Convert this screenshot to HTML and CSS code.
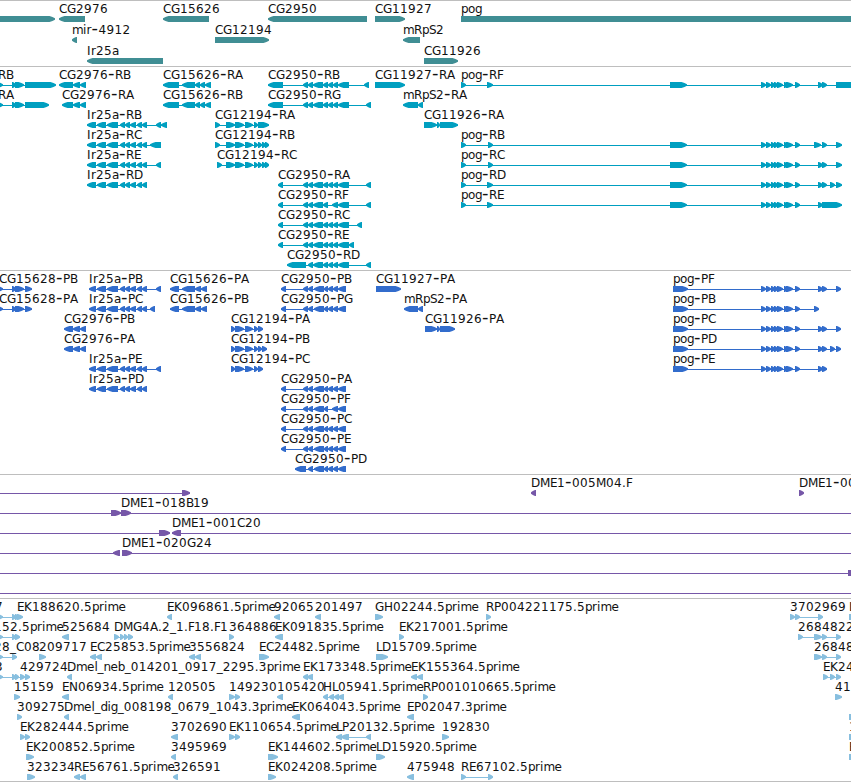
FILE: index.html
```html
<!doctype html>
<html lang="en">
  <head>
    <meta charset="utf-8">
    <meta name="viewport" content="width=device-width,initial-scale=1">

    <title>Genome browser</title>

    <link rel="stylesheet" href="styles.css">
  </head>

  <body>
    <main>
      <section class="track genes" data-track="genes"></section>
      <section class="track transcripts" data-track="transcripts"></section>
      <section class="track proteins" data-track="proteins"></section>
      <section class="track clones" data-track="clones"></section>
      <section class="track ests" data-track="ests"></section>
    </main>

    <script src="tracks.js"></script>
  </body>
</html>
```

FILE: styles.css
```css
body {
  margin: 0;
  background: #fff;
  overflow: hidden;
}

main {
  width: 851px;
  overflow: hidden;
  border-bottom: 1px solid #bebebe;
}

.track {
  box-sizing: border-box;
  border-top: 1px solid #bebebe;
  height: 204px;
  overflow: hidden;
}

.row {
  display: block;
  width: 851px;
  height: 20px;
  overflow: visible;
}

.row text {
  font-family: "DejaVu Sans", sans-serif;
  font-size: 12px;
  fill: #111;
}

/* the font's own hyphen is too short at label size */
.row .dash {
  font-size: 18px;
}

.genes {
  height: 66px;
  color: #408e94;
}

.genes .row {
  height: 21px;
}

.transcripts {
  color: #009fc0;
}

.proteins {
  color: #326ccc;
}

.clones {
  height: 124px;
  color: #7657a8;
}

.ests {
  height: 183px;
  color: #88bfdf;
}

.row path,
.row rect {
  fill: currentColor;
}
```

FILE: tracks.js
```js
(function() {
  var NS = 'http://www.w3.org/2000/svg';
  var HEAD = 5.5;

  // label advances in px, anything missing is a digit width
  var ADVANCE = {
    A: 8, B: 7, C: 8, D: 9, E: 7, F: 6, G: 9, H: 9, I: 4, K: 8, L: 6, M: 10,
    N: 9, P: 7, R: 8, S: 7, a: 7, b: 7, d: 7, e: 7.4, g: 7, i: 3.4, l: 3,
    m: 11, n: 7, o: 7, p: 7, r: 5, '-': 7, '_': 6, '.': 4
  };

  // exon groups shared by several features
  var IR = '97-106 107-118 120-125 125-130 130-136 137-142 142-147';
  var CG2950 = '303-308 308-313 313-323 323-328 328-333 333-338 338-349';
  var CG2950F = '303-308 308-313 313-323 323-328 332-338 338-349';
  var CG2950P = '303-308 308-313 314-324 324-328 328-333 333-338 338-346';
  var POG = '761-766 766-771 771-775 774-778 777-783 784-788 786-793 795-800';

  // [label, x, direction, exons, line]
  var tracks = {
    genes: [
      [
        ['', 0, '>', '-20-55'],
        ['CG2976', 59, '<', '59-85'],
        ['CG15626', 163, '<', '163-209'],
        ['CG2950', 268, '<', '268-367'],
        ['CG11927', 375, '>', '375-405'],
        ['pog', 461, '>', '461-900']
      ],
      [
        ['mir-4912', 72, '<', '72-77'],
        ['CG12194', 215, '>', '215-269'],
        ['mRpS2', 403, '<', '403-420']
      ],
      [
        ['Ir25a', 87, '<', '87-163'],
        ['CG11926', 424, '>', '424-458']
      ]
    ],

    transcripts: [
      [
        ['CG15628-RB', -66, '>', '-3-3 12-16 15-24 25-56', '0-55'],
        ['CG2976-RB', 59, '<', '59-73 73-80 80-86'],
        ['CG15626-RA', 163, '<', '163-179 182-195 195-200 200-205 205-211', '163-211'],
        ['CG2950-RB', 268, '<', '268-283 ' + CG2950 + ' 364-369', '268-369'],
        ['CG11927-RA', 375, '>', '375-405'],
        ['pog-RF', 461, '>', '461-466 487-493 670-687 ' + POG + ' 818-823 822-827 836-870', '461-851']
      ],
      [
        ['CG15628-RA', -66, '>', '-3-3 12-16 15-24 25-49', '0-48'],
        ['CG2976-RA', 62, '<', '62-73 73-80 80-86'],
        ['CG15626-RB', 163, '<', '163-179 182-195 195-200 200-205 205-211', '163-211'],
        ['CG2950-RG', 268, '<', '268-283 ' + CG2950 + ' 366-371', '268-371'],
        ['mRpS2-RA', 403, '<', '403-418 418-423']
      ],
      [
        ['Ir25a-RB', 87, '<', '87-96 ' + IR + ' 156-161 161-167', '87-167'],
        ['CG12194-RA', 215, '>', '215-220 226-235 235-244 245-253 254-258 258-269', '215-269'],
        ['CG11926-RA', 424, '>', '424-437 437-440 440-458', '424-458']
      ],
      [
        ['Ir25a-RC', 87, '<', '87-96 ' + IR + ' 150-161', '87-161'],
        ['CG12194-RB', 215, '>', '215-220 226-235 235-244 245-253 254-258 258-262 262-266 265-269', '215-269'],
        ['pog-RB', 461, '>', '461-466 488-493 670-687 ' + POG + ' 814-821 822-827 836-842', '461-842']
      ],
      [
        ['Ir25a-RE', 87, '<', '87-96 ' + IR + ' 156-161', '87-161'],
        ['CG12194-RC', 217, '>', '217-222 226-235 235-244 245-253 254-258 258-262 262-266 265-269', '217-269'],
        ['pog-RC', 461, '>', '461-466 488-493 670-687 ' + POG + ' 818-823 822-827 836-842', '461-842']
      ],
      [
        ['Ir25a-RD', 87, '<', '87-96 ' + IR, '87-147'],
        ['CG2950-RA', 278, '<', '278-283 ' + CG2950 + ' 366-371', '278-371'],
        ['pog-RD', 461, '>', '461-466 487-493 670-687 ' + POG + ' 818-823 822-827 830-835 836-842', '461-842']
      ],
      [
        ['CG2950-RF', 278, '<', '278-283 ' + CG2950F + ' 366-371', '278-371'],
        ['pog-RE', 461, '>', '461-466 487-493 670-687 ' + POG + ' 818-823 822-842', '461-842']
      ],
      [
        ['CG2950-RC', 278, '<', '278-283 ' + CG2950 + ' 357-362', '278-362']
      ],
      [
        ['CG2950-RE', 278, '<', '278-283 ' + CG2950 + ' 349-354', '278-354']
      ],
      [
        ['CG2950-RD', 287, '<', '287-306 ' + CG2950.slice(8) + ' 366-371', '287-371']
      ]
    ],

    proteins: [
      [
        ['CG15628-PB', -1, '>', '-3-3 12-16 15-24 25-32', '0-32'],
        ['Ir25a-PB', 89, '<', '89-96 ' + IR + ' 156-161', '89-161'],
        ['CG15626-PA', 170, '<', '170-179 182-195 195-201 201-207', '170-207'],
        ['CG2950-PB', 281, '<', '281-286 ' + CG2950P, '281-346'],
        ['CG11927-PA', 376, '>', '376-401'],
        ['pog-PF', 673, '>', '673-688 ' + POG + ' 818-823 822-827 836-841', '673-841']
      ],
      [
        ['CG15628-PA', -1, '>', '-3-3 12-16 15-24 25-32', '0-32'],
        ['Ir25a-PC', 89, '<', '89-96 ' + IR + ' 150-155', '89-155'],
        ['CG15626-PB', 170, '<', '170-179 182-195 195-201 201-207', '170-207'],
        ['CG2950-PG', 281, '<', '281-286 ' + CG2950P, '281-346'],
        ['mRpS2-PA', 404, '<', '404-418 418-423'],
        ['pog-PB', 673, '>', '673-688 ' + POG + ' 814-819', '673-819']
      ],
      [
        ['CG2976-PB', 64, '<', '64-73 73-80 80-86'],
        ['CG12194-PA', 231, '>', '231-235 235-244 245-253 254-258 258-263', '231-263'],
        ['CG11926-PA', 425, '>', '425-437 437-440 440-455', '425-455'],
        ['pog-PC', 673, '>', '673-688 ' + POG + ' 818-823 822-827 836-841', '673-841']
      ],
      [
        ['CG2976-PA', 64, '<', '64-73 73-80 80-86'],
        ['CG12194-PB', 231, '>', '231-235 235-244 245-253 254-258 258-262 262-267', '231-267'],
        ['pog-PD', 673, '>', '673-688 ' + POG + ' 818-823 822-827 830-835 836-841', '673-841']
      ],
      [
        ['Ir25a-PE', 89, '<', '89-96 ' + IR + ' 156-161', '89-161'],
        ['CG12194-PC', 231, '>', '231-235 235-244 245-253 254-258 258-263', '231-263'],
        ['pog-PE', 673, '>', '673-688 ' + POG + ' 818-823 822-827', '673-827']
      ],
      [
        ['Ir25a-PD', 89, '<', '89-96 ' + IR, '89-147'],
        ['CG2950-PA', 281, '<', '281-286 ' + CG2950P, '281-346']
      ],
      [
        ['CG2950-PF', 281, '<', '281-286 303-308 308-313 314-324 324-328 332-338 338-346', '281-346']
      ],
      [
        ['CG2950-PC', 281, '<', '281-286 ' + CG2950P, '281-346']
      ],
      [
        ['CG2950-PE', 281, '<', '281-286 ' + CG2950P, '281-346']
      ],
      [
        ['CG2950-PD', 295, '<', '295-306 ' + CG2950P.slice(8), '295-346']
      ]
    ],

    clones: [
      [
        ['', 0, '>', '182-190', '0-190'],
        ['DME1-005M04.F', 531, '<', '531-536'],
        ['DME1-005', 799, '>', '799-804']
      ],
      [
        ['DME1-018B19', 121, '>', '111-121 121-131', '0-851']
      ],
      [
        ['', 0, '>', '159-170', '0-170'],
        ['DME1-001C20', 172, '<', '172-181', '172-851']
      ],
      [
        ['', 0, '<', '113-120', '0-120'],
        ['DME1-020G24', 122, '>', '122-132', '122-851']
      ],
      [
        ['', 0, '>', '848-870', '0-851']
      ],
      [
        ['', 0, '>', '', '0-851']
      ]
    ],

    ests: [
      [
        ['7', -5, '>', '-3-3 12-16 15-19 17-23', '0-22'],
        ['EK188620.5prime', 17, '>', ''],
        ['EK096861.5prime', 167, '<', '167-172'],
        ['92065', 274, '<', '274-280'],
        ['201497', 315, '<', '315-321'],
        ['GH02244.5prime', 375, '>', '375-383'],
        ['RP004221175.5prime', 486, '>', '486-491'],
        ['3702969', 790, '>', '790-795 795-800 818-823', '790-823'],
        ['L', 849, '>', '849-858']
      ],
      [
        ['152.5prime', -6, '>', '-3-3 12-16 15-20', '0-20'],
        ['525684', 62, '<', '62-69'],
        ['DMG4A.2_1.F18.F1', 114, '>', '114-119 120-124 124-128 128-133', '114-133'],
        ['364886', 229, '>', '229-234'],
        ['EK091835.5prime', 275, '<', '275-283'],
        ['EK217001.5prime', 399, '>', '399-404'],
        ['2684822', 798, '>', '798-803 814-822 822-827 836-841', '798-841']
      ],
      [
        ['28_C08', -6, '>', '-3-3 12-17', '0-17'],
        ['209717', 39, '>', '39-46'],
        ['EC25853.5prime', 90, '<', '90-96 96-102'],
        ['3556824', 189, '<', '189-195 195-201'],
        ['EC24482.5prime', 259, '>', '259-269'],
        ['LD15709.5prime', 376, '>', '376-388'],
        ['26848', 814, '>', '814-822 822-827 836-841', '814-841']
      ],
      [
        ['3', -5, '>', '-3-3 12-16 15-19 20-25 25-30', '0-30'],
        ['429724', 20, '>', ''],
        ['Dmel_neb_014201_0917_2295.3prime', 67, '<', '67-72'],
        ['EK173348.5prime', 303, '<', '303-308 307-313'],
        ['EK155364.5prime', 411, '<', '411-417 417-423'],
        ['EK24', 823, '>', '823-828 830-835 836-841', '823-841']
      ],
      [
        ['15159', 14, '>', '14-20'],
        ['EN06934.5prime', 62, '<', '62-69'],
        ['120505', 168, '<', '168-173'],
        ['149230', 229, '>', '229-235 235-240'],
        ['105420', 277, '<', '277-283'],
        ['HL05941.5prime', 323, '<', '323-328 329-334 334-339 338-344', '323-344'],
        ['RP001010665.5prime', 423, '>', '423-428'],
        ['41', 835, '>', '835-842']
      ],
      [
        ['309275', 17, '>', '17-22'],
        ['Dmel_dig_008198_0679_1043.3prime', 64, '<', '64-69'],
        ['EK064043.5prime', 292, '<', '292-300'],
        ['EP02047.3prime', 407, '<', '407-414'],
        ['', 0, '>', '849-858']
      ],
      [
        ['EK282444.5prime', 20, '>', '20-25 25-30'],
        ['3702690', 171, '<', '171-178'],
        ['EK110654.5prime', 229, '>', '229-235 235-240'],
        ['LP20132.5prime', 336, '<', '336-342 341-349 366-371', '336-371'],
        ['192830', 442, '>', '442-449'],
        ['1', 849, '>', '849-858']
      ],
      [
        ['EK200852.5prime', 26, '>', '26-34'],
        ['3495969', 171, '<', '171-176'],
        ['EK144602.5prime', 268, '>', '268-278'],
        ['LD15920.5prime', 376, '>', '376-385'],
        ['E', 849, '>', '849-858']
      ],
      [
        ['323234', 27, '>', '27-35'],
        ['RE56761.5prime', 74, '<', '74-80 80-86'],
        ['326591', 173, '<', '173-178'],
        ['EK024208.5prime', 268, '>', '268-276'],
        ['475948', 407, '<', '407-414'],
        ['RE67102.5prime', 461, '>', '461-466 488-493', '461-493']
      ]
    ]
  };

  function add(parent, name, attrs) {
    var el = document.createElementNS(NS, name);
    Object.keys(attrs).forEach(function(key) {
      el.setAttribute(key, attrs[key]);
    });
    parent.appendChild(el);
    return el;
  }

  function span(str) {
    var m = str.match(/^(-?\d+)-(\d+)$/);
    return [+m[1], +m[2]];
  }

  // box with a blunt pointed end, 6px high
  function exon(svg, dir, a, b) {
    var tip = dir === '>' ? b : a;
    var tail = dir === '>' ? a : b;
    var sign = dir === '>' ? -1 : 1;
    var head = Math.min(HEAD, b - a - 1);
    var neck = tip + head * sign;
    var mid = tip + head * 0.45 * sign;
    add(svg, 'path', {
      d: 'M' + tail + ' 0H' + neck + 'L' + mid + ' 1L' + tip + ' 2.3V3.7L' + mid + ' 5L' + neck + ' 6H' + tail + 'Z',
      transform: 'translate(0 15)'
    });
  }

  function label(svg, str, x) {
    var text = add(svg, 'text', { y: 12 });
    str.split(/(-)/).forEach(function(part) {
      var dash = part === '-';
      var xs = [];
      part.split('').forEach(function(c) {
        xs.push(x.toFixed(1));
        x += ADVANCE[c] || 8;
      });
      add(text, 'tspan', { x: xs.join(' '), 'class': dash ? 'dash' : 'name' }).textContent = part;
    });
  }

  document.querySelectorAll('.track').forEach(function(track) {
    tracks[track.dataset.track].forEach(function(row) {
      var svg = add(track, 'svg', { 'class': 'row' });

      row.forEach(function(feature) {
        if (feature[4]) {
          var line = span(feature[4]);
          add(svg, 'rect', { x: line[0], y: 18, width: line[1] - line[0], height: 1 });
        }

        feature[3].split(' ').filter(Boolean).forEach(function(part) {
          var s = span(part);
          exon(svg, feature[2], s[0], s[1]);
        });

        if (feature[0]) {
          label(svg, feature[0], feature[1]);
        }
      });
    });
  });
}());
```
